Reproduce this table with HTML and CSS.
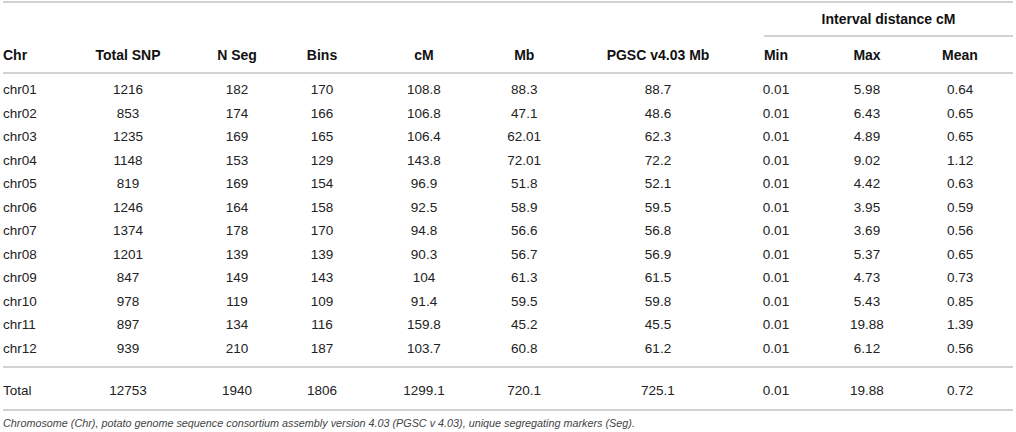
FILE: index.html
```html
<!DOCTYPE html>
<html lang="en">
<head>
<meta charset="utf-8">
<title>Chromosome table</title>
<link rel="stylesheet" href="styles.css">
</head>
<body>
<div class="wrap">
<table class="data">
  <colgroup>
    <col class="w-chr"><col class="w-snp"><col class="w-seg"><col class="w-bins"><col class="w-cm"><col class="w-mb"><col class="w-pgsc"><col class="w-min"><col class="w-max"><col class="w-mean">
  </colgroup>
  <thead>
    <tr class="group-row">
      <th colspan="7"></th>
      <th colspan="3" class="group"><div class="group-label">Interval distance cM</div></th>
    </tr>
    <tr class="head-row">
      <th class="c-chr">Chr</th>
      <th class="c-snp">Total SNP</th>
      <th class="c-seg">N Seg</th>
      <th class="c-bins">Bins</th>
      <th class="c-cm">cM</th>
      <th class="c-mb">Mb</th>
      <th class="c-pgsc">PGSC v4.03 Mb</th>
      <th class="c-min">Min</th>
      <th class="c-max">Max</th>
      <th class="c-mean">Mean</th>
    </tr>
  </thead>
  <tbody>
    <tr><td class="c-chr">chr01</td><td class="c-snp">1216</td><td class="c-seg">182</td><td class="c-bins">170</td><td class="c-cm">108.8</td><td class="c-mb">88.3</td><td class="c-pgsc">88.7</td><td class="c-min">0.01</td><td class="c-max">5.98</td><td class="c-mean">0.64</td></tr>
    <tr><td class="c-chr">chr02</td><td class="c-snp">853</td><td class="c-seg">174</td><td class="c-bins">166</td><td class="c-cm">106.8</td><td class="c-mb">47.1</td><td class="c-pgsc">48.6</td><td class="c-min">0.01</td><td class="c-max">6.43</td><td class="c-mean">0.65</td></tr>
    <tr><td class="c-chr">chr03</td><td class="c-snp">1235</td><td class="c-seg">169</td><td class="c-bins">165</td><td class="c-cm">106.4</td><td class="c-mb">62.01</td><td class="c-pgsc">62.3</td><td class="c-min">0.01</td><td class="c-max">4.89</td><td class="c-mean">0.65</td></tr>
    <tr><td class="c-chr">chr04</td><td class="c-snp">1148</td><td class="c-seg">153</td><td class="c-bins">129</td><td class="c-cm">143.8</td><td class="c-mb">72.01</td><td class="c-pgsc">72.2</td><td class="c-min">0.01</td><td class="c-max">9.02</td><td class="c-mean">1.12</td></tr>
    <tr><td class="c-chr">chr05</td><td class="c-snp">819</td><td class="c-seg">169</td><td class="c-bins">154</td><td class="c-cm">96.9</td><td class="c-mb">51.8</td><td class="c-pgsc">52.1</td><td class="c-min">0.01</td><td class="c-max">4.42</td><td class="c-mean">0.63</td></tr>
    <tr><td class="c-chr">chr06</td><td class="c-snp">1246</td><td class="c-seg">164</td><td class="c-bins">158</td><td class="c-cm">92.5</td><td class="c-mb">58.9</td><td class="c-pgsc">59.5</td><td class="c-min">0.01</td><td class="c-max">3.95</td><td class="c-mean">0.59</td></tr>
    <tr><td class="c-chr">chr07</td><td class="c-snp">1374</td><td class="c-seg">178</td><td class="c-bins">170</td><td class="c-cm">94.8</td><td class="c-mb">56.6</td><td class="c-pgsc">56.8</td><td class="c-min">0.01</td><td class="c-max">3.69</td><td class="c-mean">0.56</td></tr>
    <tr><td class="c-chr">chr08</td><td class="c-snp">1201</td><td class="c-seg">139</td><td class="c-bins">139</td><td class="c-cm">90.3</td><td class="c-mb">56.7</td><td class="c-pgsc">56.9</td><td class="c-min">0.01</td><td class="c-max">5.37</td><td class="c-mean">0.65</td></tr>
    <tr><td class="c-chr">chr09</td><td class="c-snp">847</td><td class="c-seg">149</td><td class="c-bins">143</td><td class="c-cm">104</td><td class="c-mb">61.3</td><td class="c-pgsc">61.5</td><td class="c-min">0.01</td><td class="c-max">4.73</td><td class="c-mean">0.73</td></tr>
    <tr><td class="c-chr">chr10</td><td class="c-snp">978</td><td class="c-seg">119</td><td class="c-bins">109</td><td class="c-cm">91.4</td><td class="c-mb">59.5</td><td class="c-pgsc">59.8</td><td class="c-min">0.01</td><td class="c-max">5.43</td><td class="c-mean">0.85</td></tr>
    <tr><td class="c-chr">chr11</td><td class="c-snp">897</td><td class="c-seg">134</td><td class="c-bins">116</td><td class="c-cm">159.8</td><td class="c-mb">45.2</td><td class="c-pgsc">45.5</td><td class="c-min">0.01</td><td class="c-max">19.88</td><td class="c-mean">1.39</td></tr>
    <tr><td class="c-chr">chr12</td><td class="c-snp">939</td><td class="c-seg">210</td><td class="c-bins">187</td><td class="c-cm">103.7</td><td class="c-mb">60.8</td><td class="c-pgsc">61.2</td><td class="c-min">0.01</td><td class="c-max">6.12</td><td class="c-mean">0.56</td></tr>
  </tbody>
  <tbody class="totals">
    <tr><td class="c-chr">Total</td><td class="c-snp">12753</td><td class="c-seg">1940</td><td class="c-bins">1806</td><td class="c-cm">1299.1</td><td class="c-mb">720.1</td><td class="c-pgsc">725.1</td><td class="c-min">0.01</td><td class="c-max">19.88</td><td class="c-mean">0.72</td></tr>
  </tbody>
</table>
<p class="note">Chromosome (Chr), potato genome sequence consortium assembly version 4.03 (PGSC v 4.03), unique segregating markers (Seg).</p>
</div>
</body>
</html>
```

FILE: styles.css
```css
html, body {
  margin: 0;
  padding: 0;
  background: #ffffff;
}

.wrap {
  padding: 1px 3px 0 3px;
  font-family: "Liberation Sans", Arial, Helvetica, sans-serif;
  color: #222222;
}

.data {
  width: 1010px;
  table-layout: fixed;
  border-collapse: collapse;
  font-size: 13.5px;
  border-top: 2px solid #d2d2d2;
}

.w-chr { width: 70.5px; }
.w-snp { width: 109px; }
.w-seg { width: 97px; }
.w-bins { width: 94px; }
.w-cm { width: 101px; }
.w-mb { width: 116.5px; }
.w-pgsc { width: 126px; }
.w-min { width: 104px; }
.w-max { width: 92px; }
.w-mean { width: 100px; }

.data th, .data td {
  padding: 0;
  text-align: center;
  white-space: nowrap;
  vertical-align: middle;
}

.data th {
  font-weight: bold;
  font-size: 14px;
  color: #111111;
}

.data .c-chr { text-align: left; }
.data .c-seg { padding-left: 12px; }
.data .c-bins { padding-right: 9px; }
.data .c-mb { padding-right: 17px; }
.data .c-pgsc { padding-left: 8px; }
.data .c-min { padding-left: 14px; }
.data .c-mean { padding-right: 6px; }

.group-row th {
  height: 32px;
  padding: 0;
}

.group-label {
  margin-left: 47px;
  height: 32px;
  line-height: 32px;
  border-bottom: 2px solid #d2d2d2;
  text-align: center;
}

.group {
  vertical-align: bottom;
}

.head-row th {
  height: 35px;
  border-bottom: 2px solid #d2d2d2;
}

.data tbody td {
  height: 23.5px;
}

.data tbody tr:first-child td {
  padding-top: 4px;
}

.data tbody:not(.totals) tr:last-child td {
  padding-bottom: 6px;
}

.totals tr td {
  height: 37px;
  border-top: 2px solid #d2d2d2;
  border-bottom: 2px solid #d2d2d2;
}

.totals tr:first-child td {
  padding-top: 0;
}

.note {
  margin: 4px 0 0 0;
  font-size: 10.8px;
  line-height: 16px;
  font-style: italic;
  color: #444444;
}
```
